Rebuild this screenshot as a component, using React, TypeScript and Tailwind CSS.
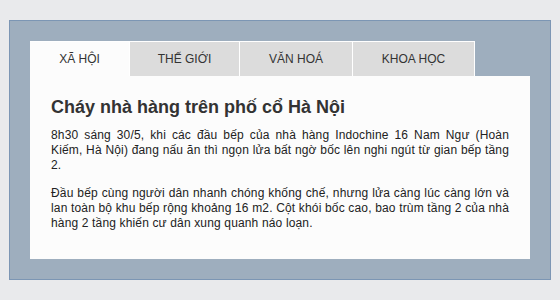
import React from "react";

const tabs = [
  { t: "Xã hội", w: "w-[100px]" },
  { t: "Thế giới", w: "w-[110px]" },
  { t: "Văn hoá", w: "w-[113px]" },
  { t: "Khoa học", w: "w-[122px]" },
];

export default function App() {
  return (
    <div
      className="w-[560px] h-[300px] bg-[#e9eaec] pt-5 pl-[9px]"
      style={{ fontFamily: '"Liberation Sans", Arial, sans-serif' }}
    >
      <div className="w-[542px] h-[260px] border border-[#7c96b4] bg-[#9eaebe] p-5">
        <div className="flex h-[35px]">
          {tabs.map((x, i) => (
            <div
              key={x.t}
              className={
                (i === 0 ? "bg-[#fcfcfc] " : "bg-[#dcdcdc] ") +
                x.w +
                " border-t border-r border-white text-center text-[12px] leading-[34px] text-[#333] uppercase"
              }
            >
              {x.t}
            </div>
          ))}
        </div>
        <div className="h-[183px] bg-[#fcfcfc] px-[21px] pt-5">
          <h2 className="text-[18px] font-bold leading-[22px] text-[#333] mb-[10px]">
            Cháy nhà hàng trên phố cổ Hà Nội
          </h2>
          <p className="text-[12px] leading-[15px] text-[#222] text-justify tracking-[0.15px]">
            8h30 sáng 30/5, khi các đầu bếp của nhà hàng Indochine 16 Nam Ngư (Hoàn Kiếm, Hà Nội) đang nấu ăn thì ngọn lửa bất ngờ bốc lên nghi ngút từ gian bếp tầng 2.
          </p>
          <p className="mt-[13px] text-[12px] leading-[15px] text-[#222] text-justify tracking-[0.15px]">
            Đầu bếp cùng người dân nhanh chóng khống chế, nhưng lửa càng lúc càng lớn và lan toàn bộ khu bếp rộng khoảng 16 m2. Cột khói bốc cao, bao trùm tầng 2 của nhà hàng 2 tầng khiến cư dân xung quanh náo loạn.
          </p>
        </div>
      </div>
    </div>
  );
}
